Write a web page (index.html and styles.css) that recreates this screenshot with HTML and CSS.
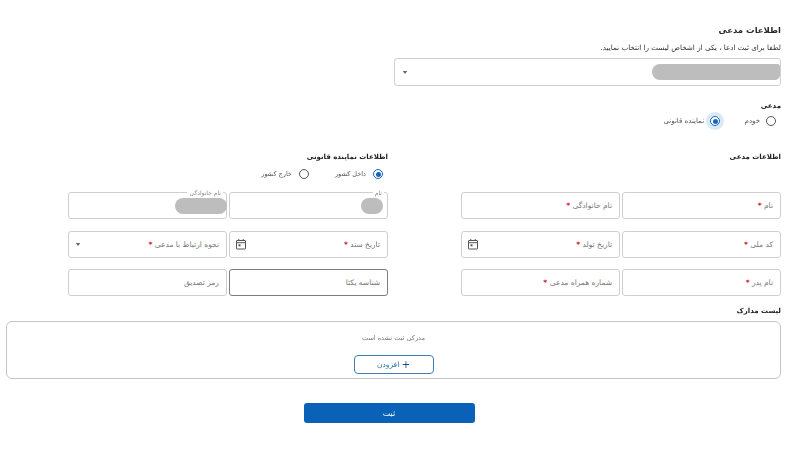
FILE: index.html
```html
<!DOCTYPE html>
<html lang="fa" dir="rtl">
<head>
<meta charset="utf-8">
<title>اطلاعات مدعی</title>
<link rel="stylesheet" href="styles.css">
</head>
<body>
<main class="page">
  <h1 class="title">اطلاعات مدعی</h1>
  <p class="hint">لطفا برای ثبت ادعا ، یکی از اشخاص لیست را انتخاب نمایید.</p>
  <div class="field person-select">
    <span class="blob blob-wide"></span>
    <svg class="caret" viewBox="0 0 8 4"><path d="M1 0h6L4 4z"/></svg>
  </div>
  <h2 class="heading claimant-heading">مدعی</h2>
  <div class="radios claimant-radios">
    <label class="radio"><span class="dot"></span>خودم</label>
    <label class="radio"><span class="dot on halo"></span>نماینده قانونی</label>
  </div>
  <div class="columns">
    <section class="column">
      <h2 class="heading col-heading">اطلاعات مدعی</h2>
      <div class="radio-spacer"></div>
      <div class="grid">
        <div class="field"><span class="ph">نام <b>*</b></span></div>
        <div class="field"><span class="ph">نام خانوادگی <b>*</b></span></div>
        <div class="field"><span class="ph">کد ملی <b>*</b></span></div>
        <div class="field"><span class="ph">تاریخ تولد <b>*</b></span>
          <svg class="cal" viewBox="0 0 10 12"><path class="cal-line" d="M1 2.500h8a.5.5 0 0 1 .5.5v7.500a.5.5 0 0 1-.5.5h-8a.5.5 0 0 1-.5-.5v-7.500a.5.5 0 0 1 .5-.5zM.5 4.700h9M2.800 1v2M7.200 1v2"/><rect x="2.500" y="6.300" width="2" height="2"/></svg>
        </div>
        <div class="field"><span class="ph">نام پدر <b>*</b></span></div>
        <div class="field"><span class="ph">شماره همراه مدعی <b>*</b></span></div>
      </div>
    </section>
    <section class="column">
      <h2 class="heading col-heading">اطلاعات نماینده قانونی</h2>
      <div class="radios rep-radios">
        <label class="radio"><span class="dot on"></span>داخل کشور</label>
        <label class="radio"><span class="dot"></span>خارج کشور</label>
      </div>
      <div class="grid">
        <div class="field"><span class="legend">نام</span><span class="blob blob-small"></span></div>
        <div class="field"><span class="legend">نام خانوادگی</span><span class="blob blob-mid"></span></div>
        <div class="field"><span class="ph">تاریخ سند <b>*</b></span>
          <svg class="cal" viewBox="0 0 10 12"><path class="cal-line" d="M1 2.500h8a.5.5 0 0 1 .5.5v7.500a.5.5 0 0 1-.5.5h-8a.5.5 0 0 1-.5-.5v-7.500a.5.5 0 0 1 .5-.5zM.5 4.700h9M2.800 1v2M7.200 1v2"/><rect x="2.500" y="6.300" width="2" height="2"/></svg>
        </div>
        <div class="field"><span class="ph">نحوه ارتباط با مدعی <b>*</b></span>
          <svg class="caret" viewBox="0 0 8 4"><path d="M1 0h6L4 4z"/></svg>
        </div>
        <div class="field dark"><span class="ph">شناسه یکتا</span></div>
        <div class="field"><span class="ph">رمز تصدیق</span></div>
      </div>
    </section>
  </div>
  <h2 class="heading docs-heading">لیست مدارک</h2>
  <div class="docs">
    <p class="empty">مدرکی ثبت نشده است</p>
    <button class="add" type="button"><span class="plus">+</span> افزودن</button>
  </div>
  <div class="submit-row"><button class="submit" type="button">ثبت</button></div>
</main>
</body>
</html>
```
FILE: styles.css
```css
* { box-sizing: border-box; }
html, body { margin: 0; height: 100%; background: #fff; overflow: hidden; }
body { font-family: "DejaVu Sans", "Noto Sans", sans-serif; color: #222; }
.page { width: 800px; height: 450px; padding: 24px 19px 0 19px; filter: blur(0.35px); }
.title { margin: 0; font-size: 8.500px; line-height: 12px; font-weight: 700; color: #2a2a2a; }
.hint { margin: 7px 0 0; font-size: 7.200px; line-height: 10px; color: #333; }
.heading { margin: 0; font-size: 7px; line-height: 10px; font-weight: 700; color: #222; }

.field {
  position: relative; height: 27px; display: flex; align-items: center;
  justify-content: space-between; padding: 0 7px 0 6px;
  border: 1px solid #cfcfcf; border-radius: 3px; background: #fff;
}
.field.dark { border-color: #7d7d7d; }
.person-select { width: 387px; height: 28px; margin-top: 5px; padding: 0 0 0 7px; }
.ph { font-size: 7.500px; color: #777; white-space: nowrap; }
.ph b { color: #d0102a; font-weight: 700; }
.caret { width: 6px; height: 3px; fill: #666; margin-right: auto; }
.cal { width: 10px; height: 12px; fill: #555; margin-right: auto; }
.cal-line { fill: none; stroke: #555; stroke-width: 1; }
.blob { display: block; background: #bdbdbd; border-radius: 8px; }
.blob-wide { width: 128px; height: 16px; border-radius: 9px 3px 6px 9px; }
.blob-small { width: 22px; height: 16px; margin-right: -3px; }
.blob-mid { width: 52px; height: 16px; margin-right: -8px; }
.legend { position: absolute; top: -3px; right: 3px; padding: 0 2px; font-size: 6px; line-height: 6px; color: #888; background: #fff; }

.claimant-heading { margin-top: 15px; }
.radios { display: flex; align-items: center; font-size: 7px; color: #555; }
.radio { display: flex; align-items: center; gap: 6px; }
.dot {
  position: relative; display: block; width: 10px; height: 10px; border-radius: 50%;
  border: 1px solid #555; background: #fff;
}
.dot.on { border-color: #1565b8; }
.dot.on::after { content: ""; position: absolute; inset: 1.500px; border-radius: 50%; background: #1565b8; }
.halo { box-shadow: 0 0 0 4px #d9e9f8; }
.claimant-radios { gap: 24.500px; margin-top: 4px; padding-right: 5px; height: 12px; }
.rep-radios { gap: 26px; height: 12px; margin-top: 6px; padding-right: 5px; font-size: 6.500px; }
.rep-radios .radio { gap: 7px; }
.radio-spacer { height: 12px; margin-top: 6px; }

.columns { display: flex; gap: 73px; margin-top: 25px; }
.column { width: 320px; }
.grid { display: grid; grid-template-columns: 159px 159px; column-gap: 2px; row-gap: 11.500px; margin-top: 12px; }

.docs-heading { margin-top: 10px; }
.docs {
  margin: 5px 0 0 0; width: 775px; height: 58px; border: 1px solid #c4c4c4; border-radius: 6px;
  display: flex; flex-direction: column; align-items: center;
}
.empty { margin: 11px 0 0; font-size: 6.500px; line-height: 10px; color: #777; }
.add {
  margin-top: 12px; width: 80px; height: 19px; padding: 0; border: 1px solid #3f7fb5; border-radius: 4px; background: #fff;
  font: 7.500px "DejaVu Sans", sans-serif; color: #2f6ea5;
}
.plus { font-size: 10px; color: #1b4f80; vertical-align: -1px; }
.submit-row { display: flex; justify-content: center; margin-top: 24px; padding-right: 22px; }
.submit {
  width: 171px; height: 20px; padding: 0; border: 0; border-radius: 3px; background: #0a62b8;
  font: 8px "DejaVu Sans", sans-serif; color: #fff;
}
```
